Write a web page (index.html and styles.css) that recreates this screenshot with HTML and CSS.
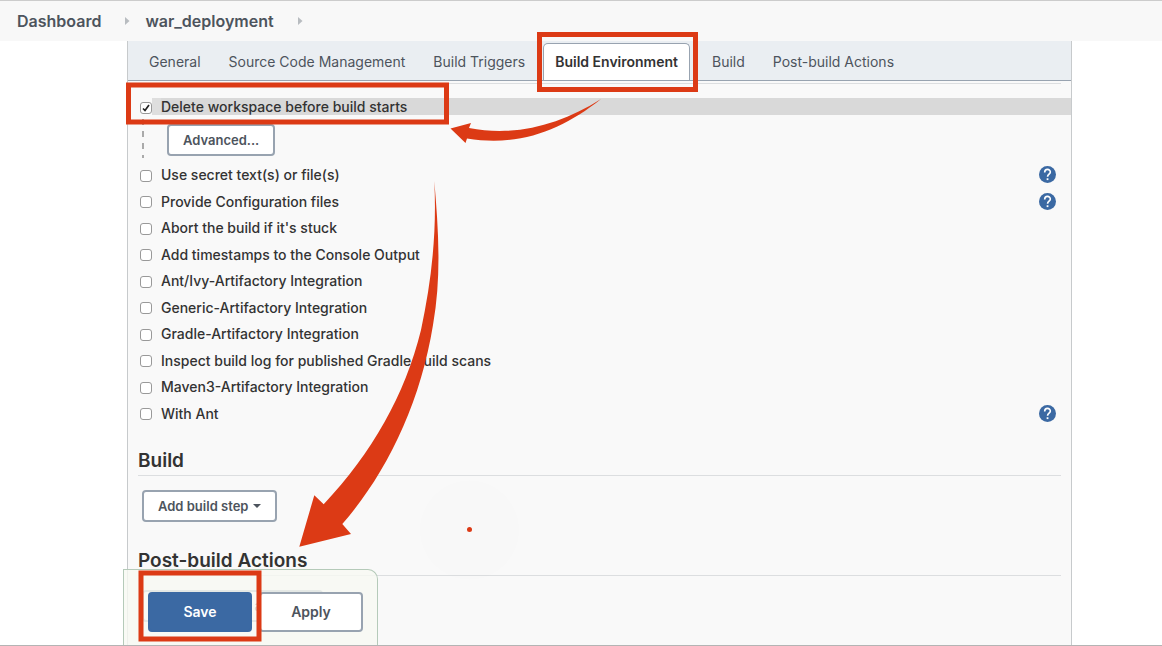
FILE: index.html
```html
<!DOCTYPE html>
<html lang="en">
<head>
<meta charset="utf-8">
<meta name="viewport" content="width=device-width, initial-scale=1">
<title>war_deployment Config</title>
<link rel="stylesheet" href="styles.css">
</head>
<body>
<svg class="symbols" aria-hidden="true">
  <symbol id="crumb" viewBox="0 0 5 8"><path d="M0 0 4.500 4 0 8Z" fill="#b8bcc0"/></symbol>
  <symbol id="help" viewBox="0 0 24 24"><path fill="#3b69a3" d="M12 0a12 12 0 1 0 0 24 12 12 0 0 0 0-24Z"/><path d="M8 9c0-5.600 8-5.500 8-.5 0 3-3.900 3.100-3.900 6.700" fill="none" stroke="#fff" stroke-width="2.300"/><rect x="10.800" y="17.300" width="2.500" height="2.600" fill="#fff"/></symbol>
</svg>

<nav class="breadcrumbs" aria-label="Breadcrumb">
  <a href="#">Dashboard</a>
  <svg class="crumb"><use href="#crumb"/></svg>
  <a href="#">war_deployment</a>
  <svg class="crumb"><use href="#crumb"/></svg>
</nav>

<main class="config">
  <nav class="tabs" aria-label="Sections">
    <a class="tab" href="#">General</a>
    <a class="tab" href="#">Source Code Management</a>
    <a class="tab" href="#">Build Triggers</a>
    <a class="tab active" href="#" aria-current="true">Build Environment</a>
    <a class="tab" href="#">Build</a>
    <a class="tab" href="#">Post-build Actions</a>
  </nav>

  <form class="sections">
    <section class="environment">
      <label class="option selected"><input type="checkbox" checked><span>Delete workspace before build starts</span></label>
      <div class="nested"><button class="button" type="button">Advanced...</button></div>
      <div class="options">
        <div class="row"><label class="option"><input type="checkbox"><span>Use secret text(s) or file(s)</span></label><a class="help" href="#" aria-label="Help"><svg><use href="#help"/></svg></a></div>
        <div class="row"><label class="option"><input type="checkbox"><span>Provide Configuration files</span></label><a class="help" href="#" aria-label="Help"><svg><use href="#help"/></svg></a></div>
        <div class="row"><label class="option"><input type="checkbox"><span>Abort the build if it's stuck</span></label></div>
        <div class="row"><label class="option"><input type="checkbox"><span>Add timestamps to the Console Output</span></label></div>
        <div class="row"><label class="option"><input type="checkbox"><span>Ant/Ivy-Artifactory Integration</span></label></div>
        <div class="row"><label class="option"><input type="checkbox"><span>Generic-Artifactory Integration</span></label></div>
        <div class="row"><label class="option"><input type="checkbox"><span>Gradle-Artifactory Integration</span></label></div>
        <div class="row"><label class="option"><input type="checkbox"><span>Inspect build log for published Gradle build scans</span></label></div>
        <div class="row"><label class="option"><input type="checkbox"><span>Maven3-Artifactory Integration</span></label></div>
        <div class="row"><label class="option"><input type="checkbox"><span>With Ant</span></label><a class="help" href="#" aria-label="Help"><svg><use href="#help"/></svg></a></div>
      </div>
    </section>
    <section class="section">
      <h2>Build</h2>
      <button class="button" type="button">Add build step<span class="caret"></span></button>
    </section>
    <section class="section">
      <h2>Post-build Actions</h2>
      <button class="button" type="button">Add post-build action<span class="caret"></span></button>
    </section>
  </form>
</main>

<div class="actions">
  <button class="action primary" type="submit">Save</button>
  <button class="action" type="button">Apply</button>
</div>

<svg class="annotations" aria-hidden="true">
  <circle cx="469.500" cy="530" r="50" fill="#000" fill-opacity=".004"/>
  <g fill="none" stroke="#dc3a15" stroke-width="5">
    <rect x="539.500" y="34.500" width="156" height="55"/>
    <rect x="128.500" y="85" width="318" height="37"/>
    <rect x="141" y="573" width="118" height="66"/>
  </g>
  <g fill="#dc3a15">
    <path d="M450.500 128.500 471 123 469 128C515 137 560 125 601 99 562 130 520 147 467 138.500L465.500 143Z"/>
    <path d="M434.300 181C438 225 442 275 433 325 420 405 386 474 342.300 524L351 534 299.300 546.700 314.300 495.300 323.700 504.300C372 453 405 395 421 330 431 283 437 235 434.300 181Z"/>
    <circle cx="469.500" cy="529.500" r="2.500"/>
  </g>
</svg>
</body>
</html>
```
FILE: styles.css
```css
* {
  box-sizing: border-box;
}

body {
  margin: 0;
  height: 100vh;
  display: flex;
  flex-direction: column;
  position: relative;
  overflow: hidden;
  border-top: 1px solid #ccc;
  border-bottom: 1px solid #b4b4b4;
  background: #fff;
  color: #333;
  font: 450 14px/17px Inter, "Liberation Sans", sans-serif;
}

a {
  color: inherit;
  text-decoration: none;
}

.symbols {
  position: absolute;
  width: 0;
  height: 0;
}

.breadcrumbs {
  display: flex;
  flex: none;
  align-items: center;
  height: 40px;
  padding-left: 17px;
  background: #f8f8f8;
  color: #4d545d;
  font-size: 16px;
  font-weight: 600;
}

.crumb {
  width: 5px;
  height: 8px;
  margin: 0 15px 0 24px;
}

.config {
  flex: 1;
  min-height: 0;
  overflow: hidden;
  margin: 0 90px 0 127px;
  border: solid #c7cacc;
  border-width: 0 1px;
  background: #f9f9f9;
}

.tabs {
  display: flex;
  align-items: flex-end;
  height: 40px;
  padding-left: 7px;
  border-bottom: 1px solid #98a3b0;
  background: #eaeef2;
  color: #4d545d;
  font-weight: 400;
}

.tab {
  padding: 0 14px;
  line-height: 36px;
}

.tab.active {
  margin: 0 8px 0 4px;
  padding: 0 11px;
  border: 1px solid #98a3b0;
  border-bottom: 0;
  border-radius: 5px 5px 0 0;
  background: #fff;
  color: #333;
  font-weight: 600;
}

.sections {
  padding: 2px 0 0 10px;
}

.environment::before {
  content: "";
  display: block;
  height: 1px;
  margin: 0 10px 14px 0;
  background: #dcdee0;
}

.option {
  display: flex;
  align-items: center;
}

.option input {
  appearance: none;
  flex: none;
  width: 12px;
  height: 12px;
  margin: 2px 9px 0 2px;
  border: 1px solid #999;
  border-radius: 3px;
  background: #fff;
}

.option input:checked {
  background: #fff url("data:image/svg+xml,%3Csvg xmlns='http://www.w3.org/2000/svg' viewBox='0 0 10 10'%3E%3Cpath d='M2 5.500 4 7.500 8 2' fill='none' stroke='%23222' stroke-width='1.700'/%3E%3C/svg%3E");
}

.selected {
  background: linear-gradient(to right, #f9f9f9 14px, #dedede 14px, #dedede 23px, #d9d9d9 23px);
}

.nested {
  margin-left: 4px;
  padding: 9px 0 2px 25px;
  background: repeating-linear-gradient(#aaa 0 6px, transparent 6px 12px) 0 100% / 2px 39px no-repeat;
}

.button {
  display: inline-flex;
  align-items: center;
  height: 32px;
  padding: 0 14px;
  border: 2px solid #98a3b0;
  border-radius: 4px;
  background: #fff;
  color: #4d545d;
  font: 600 13px/16px Inter, "Liberation Sans", sans-serif;
}

.caret {
  margin-left: 5px;
  border: 4px solid transparent;
  border-top-color: #4d545d;
  border-bottom: 0;
}

.options {
  padding: 3px 0 1px;
}

.row {
  display: flex;
  align-items: center;
  justify-content: space-between;
  height: 27px;
}

.row:nth-child(even) {
  height: 26px;
}

.help,
.help svg {
  display: block;
  width: 17px;
  height: 17px;
}

.help {
  margin-right: 15px;
}

.section h2 {
  margin: 0 10px 14px 0;
  padding: 21px 0 1px;
  border-bottom: 1px solid #dcdee0;
  font-size: 19px;
  line-height: 26px;
  font-weight: 600;
}

.section .button {
  margin: 0 0 5px 4px;
}

.actions {
  position: absolute;
  bottom: 0;
  left: 123px;
  display: flex;
  gap: 7px;
  padding: 22px 14px 13px 24px;
  border: 1px solid #b5cab9;
  border-bottom: 0;
  border-radius: 0 10px 0 0;
  background: rgba(248, 249, 243, 0.8);
}

.action {
  width: 104px;
  height: 40px;
  border: 2px solid #98a3b0;
  border-radius: 4px;
  background: #fff;
  color: #4d545d;
  font: 600 14px/20px Inter, "Liberation Sans", sans-serif;
}

.action.primary {
  border-color: #3b69a3;
  background: #3b69a3;
  color: #fff;
}

.annotations {
  position: absolute;
  top: -1px;
  left: 0;
  width: 100%;
  height: 100%;
  overflow: visible;
  pointer-events: none;
}
```
